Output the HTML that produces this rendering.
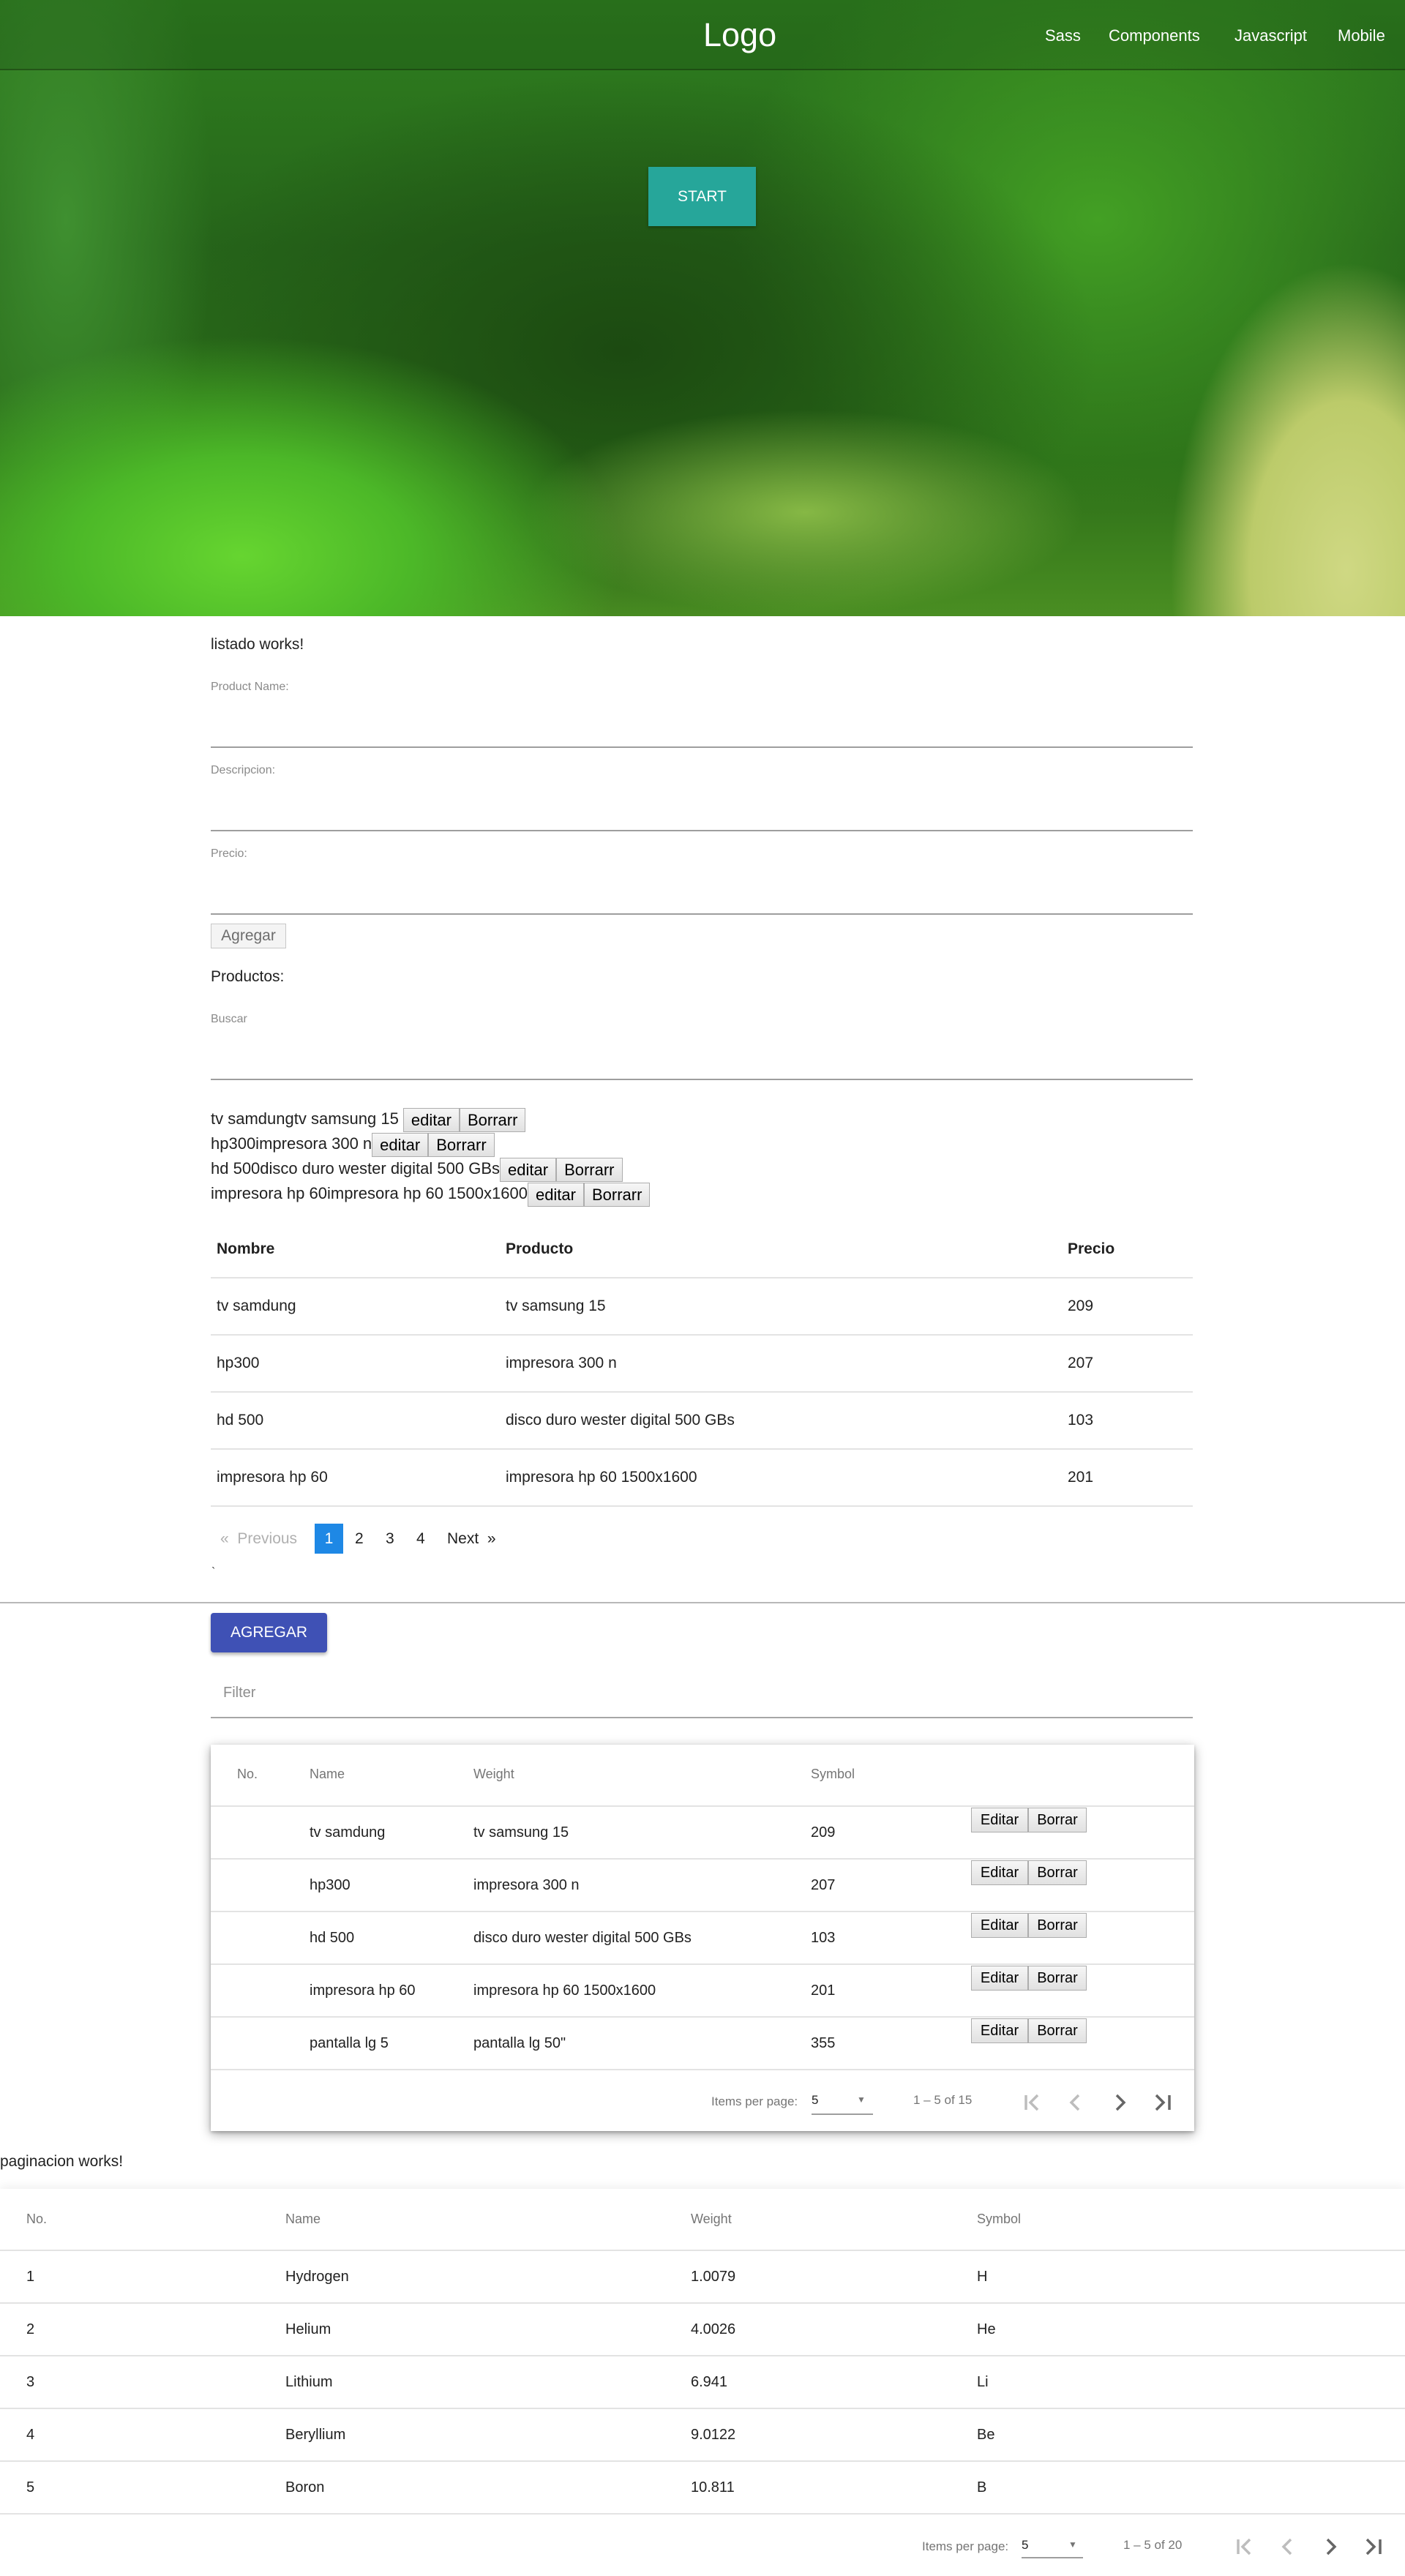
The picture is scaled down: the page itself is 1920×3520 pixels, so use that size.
<!DOCTYPE html>
<html><head><meta charset="utf-8">
<style>
*{box-sizing:border-box;margin:0;padding:0}
body{width:1920px;height:3520px;position:relative;background:#fff;font-family:"Liberation Sans",sans-serif;color:#212121;overflow:hidden}
.a{position:absolute;white-space:nowrap}
#hero{position:absolute;left:0;top:0;width:1920px;height:842px;overflow:hidden;
background:
radial-gradient(ellipse 240px 420px at 1840px 780px,#cfd883 0%,#bccb6a 55%,rgba(170,190,80,0) 100%),
radial-gradient(ellipse 520px 300px at 330px 760px,#66d530 0%,#4cb828 45%,rgba(60,150,30,0) 100%),
radial-gradient(ellipse 380px 140px at 1100px 700px,#86b845 0%,rgba(100,160,50,0) 100%),
radial-gradient(ellipse 200px 500px at 90px 300px,#3f9030 0%,rgba(40,110,30,0) 100%),
radial-gradient(ellipse 650px 380px at 850px 480px,#1c4a11 0%,rgba(30,80,20,0) 100%),
radial-gradient(ellipse 500px 400px at 1500px 300px,#43a024 0%,rgba(60,150,30,0) 100%),
linear-gradient(180deg,#2f7f1f 0%,#26651a 40%,#2b6e18 75%,#4a8e22 100%);}
#nav{position:absolute;left:0;top:0;width:1920px;height:96px;background:rgba(10,40,10,.18);border-bottom:2px solid rgba(20,40,10,.4)}
.nl{position:absolute;top:36px;color:#fff;font-size:22px}
.lbl{position:absolute;left:288px;font-size:16px;color:#8a8a8a}
.ln{position:absolute;left:288px;width:1342px;height:2px;background:#9e9e9e}
.btn{display:inline-block;border:1px solid #adadad;background:linear-gradient(#f6f6f6,#e1e1e1);font-size:22px;padding:2px 10px;line-height:27px;vertical-align:middle;color:#000}
.row{position:absolute;left:288px;font-size:22px;height:34px;line-height:34px}
.t1 div{position:absolute;font-size:21px}
.hl{position:absolute;height:2px;background:#e3e3e3}
.mh{position:absolute;font-size:18px;color:#757575}
.mc{position:absolute;font-size:20px;color:#212121}
.eb{position:absolute;height:34px;border:1px solid #adadad;background:linear-gradient(#f6f6f6,#e1e1e1);font-size:20px;line-height:32px;text-align:center;color:#000}
.pg{position:absolute;font-size:17px;color:#757575}
</style></head><body>
<div id="hero">
  <div id="nav"></div>
  <div class="a" style="left:961px;top:22px;font-size:45px;color:#fff">Logo</div>
  <div class="nl" style="left:1428px">Sass</div>
  <div class="nl" style="left:1515px">Components</div>
  <div class="nl" style="left:1687px">Javascript</div>
  <div class="nl" style="left:1828px">Mobile</div>
  <div class="a" style="left:886px;top:228px;width:147px;height:81px;background:#26a69a;color:#fff;font-size:21px;line-height:81px;text-align:center;box-shadow:0 2px 4px rgba(0,0,0,.3)">START</div>
</div>

<div class="a" style="left:288px;top:869px;font-size:21px">listado works!</div>
<div class="lbl" style="top:930px">Product Name:</div>
<div class="ln" style="top:1020px"></div>
<div class="lbl" style="top:1044px">Descripcion:</div>
<div class="ln" style="top:1134px"></div>
<div class="lbl" style="top:1158px">Precio:</div>
<div class="ln" style="top:1248px"></div>
<div class="a" style="left:288px;top:1262px;width:103px;height:34px;border:1px solid #c8c8c8;background:#f4f4f4;color:#6d6d6d;font-size:21px;line-height:32px;text-align:center">Agregar</div>
<div class="a" style="left:288px;top:1323px;font-size:21px">Productos:</div>
<div class="lbl" style="top:1384px">Buscar</div>
<div class="ln" style="top:1474px"></div>

<div class="row" style="top:1512px">tv samdungtv samsung 15 <span class="btn">editar</span><span class="btn">Borrarr</span></div>
<div class="row" style="top:1546px">hp300impresora 300 n<span class="btn">editar</span><span class="btn">Borrarr</span></div>
<div class="row" style="top:1580px">hd 500disco duro wester digital 500 GBs<span class="btn">editar</span><span class="btn">Borrarr</span></div>
<div class="row" style="top:1614px">impresora hp 60impresora hp 60 1500x1600<span class="btn">editar</span><span class="btn">Borrarr</span></div>

<div class="t1">
<div style="left:296px;top:1695px;font-weight:bold">Nombre</div>
<div style="left:691px;top:1695px;font-weight:bold">Producto</div>
<div style="left:1459px;top:1695px;font-weight:bold">Precio</div>
<div style="left:296px;top:1773px">tv samdung</div><div style="left:691px;top:1773px">tv samsung 15</div><div style="left:1459px;top:1773px">209</div>
<div style="left:296px;top:1851px">hp300</div><div style="left:691px;top:1851px">impresora 300 n</div><div style="left:1459px;top:1851px">207</div>
<div style="left:296px;top:1929px">hd 500</div><div style="left:691px;top:1929px">disco duro wester digital 500 GBs</div><div style="left:1459px;top:1929px">103</div>
<div style="left:296px;top:2007px">impresora hp 60</div><div style="left:691px;top:2007px">impresora hp 60 1500x1600</div><div style="left:1459px;top:2007px">201</div>
</div>
<div class="hl" style="left:288px;width:1342px;top:1745px"></div>
<div class="hl" style="left:288px;width:1342px;top:1823px"></div>
<div class="hl" style="left:288px;width:1342px;top:1901px"></div>
<div class="hl" style="left:288px;width:1342px;top:1979px"></div>
<div class="hl" style="left:288px;width:1342px;top:2057px"></div>

<div class="a" style="left:301px;top:2091px;font-size:21px;color:#b0b0b0">«&nbsp;&nbsp;Previous</div>
<div class="a" style="left:430px;top:2082px;width:39px;height:41px;background:#1e88e5;color:#fff;font-size:21px;line-height:41px;text-align:center">1</div>
<div class="a" style="left:485px;top:2091px;font-size:21px">2</div>
<div class="a" style="left:527px;top:2091px;font-size:21px">3</div>
<div class="a" style="left:569px;top:2091px;font-size:21px">4</div>
<div class="a" style="left:611px;top:2091px;font-size:21px">Next&nbsp;&nbsp;»</div>
<div class="a" style="left:289px;top:2140px;font-size:16px">`</div>
<div class="a" style="left:0;top:2189px;width:1920px;height:2px;background:#b8b8b8"></div>
<div class="a" style="left:288px;top:2204px;width:159px;height:54px;background:#3f51b5;border-radius:4px;color:#fff;font-size:21px;line-height:54px;text-align:center;box-shadow:0 3px 5px rgba(0,0,0,.3)">AGREGAR</div>
<div class="a" style="left:305px;top:2302px;font-size:20px;color:#8e8e8e">Filter</div>
<div class="a" style="left:288px;top:2346px;width:1342px;height:2px;background:#a6a6a6"></div>

<div class="a" style="left:288px;top:2384px;width:1344px;height:528px;background:#fff;box-shadow:0 4px 14px rgba(0,0,0,.35),0 2px 4px rgba(0,0,0,.2)"></div>
<div class="mh" style="left:324px;top:2414px">No.</div>
<div class="mh" style="left:423px;top:2414px">Name</div>
<div class="mh" style="left:647px;top:2414px">Weight</div>
<div class="mh" style="left:1108px;top:2414px">Symbol</div>
<div class="hl" style="left:288px;width:1344px;top:2467px"></div>
<div class="hl" style="left:288px;width:1344px;top:2539px"></div>
<div class="hl" style="left:288px;width:1344px;top:2611px"></div>
<div class="hl" style="left:288px;width:1344px;top:2683px"></div>
<div class="hl" style="left:288px;width:1344px;top:2755px"></div>
<div class="hl" style="left:288px;width:1344px;top:2827px"></div>

<div class="mc" style="left:423px;top:2493px">tv samdung</div><div class="mc" style="left:647px;top:2493px">tv samsung 15</div><div class="mc" style="left:1108px;top:2493px">209</div>
<div class="mc" style="left:423px;top:2565px">hp300</div><div class="mc" style="left:647px;top:2565px">impresora 300 n</div><div class="mc" style="left:1108px;top:2565px">207</div>
<div class="mc" style="left:423px;top:2637px">hd 500</div><div class="mc" style="left:647px;top:2637px">disco duro wester digital 500 GBs</div><div class="mc" style="left:1108px;top:2637px">103</div>
<div class="mc" style="left:423px;top:2709px">impresora hp 60</div><div class="mc" style="left:647px;top:2709px">impresora hp 60 1500x1600</div><div class="mc" style="left:1108px;top:2709px">201</div>
<div class="mc" style="left:423px;top:2781px">pantalla lg 5</div><div class="mc" style="left:647px;top:2781px">pantalla lg 50"</div><div class="mc" style="left:1108px;top:2781px">355</div>

<div class="eb" style="left:1327px;top:2470px;width:78px">Editar</div><div class="eb" style="left:1405px;top:2470px;width:80px">Borrar</div>
<div class="eb" style="left:1327px;top:2542px;width:78px">Editar</div><div class="eb" style="left:1405px;top:2542px;width:80px">Borrar</div>
<div class="eb" style="left:1327px;top:2614px;width:78px">Editar</div><div class="eb" style="left:1405px;top:2614px;width:80px">Borrar</div>
<div class="eb" style="left:1327px;top:2686px;width:78px">Editar</div><div class="eb" style="left:1405px;top:2686px;width:80px">Borrar</div>
<div class="eb" style="left:1327px;top:2758px;width:78px">Editar</div><div class="eb" style="left:1405px;top:2758px;width:80px">Borrar</div>

<div class="pg" style="left:972px;top:2862px">Items per page:</div>
<div class="a" style="left:1109px;top:2860px;font-size:17px">5</div>
<div class="a" style="left:1171px;top:2862px;font-size:12px;color:#757575">▼</div>
<div class="a" style="left:1109px;top:2888px;width:84px;height:2px;background:#9e9e9e"></div>
<div class="pg" style="left:1248px;top:2860px">1 – 5 of 15</div>
<svg class="a" style="left:1390px;top:2855px" width="230" height="36" viewBox="0 0 230 36">
<g fill="none" stroke-width="3.5">
<path d="M12 8v20M28 8l-10 10 10 10" stroke="#bdbdbd"/>
<path d="M84 8l-10 10 10 10" stroke="#bdbdbd"/>
<path d="M136 8l10 10-10 10" stroke="#666"/>
<path d="M190 8l10 10-10 10M208 8v20" stroke="#666"/>
</g></svg>

<div class="a" style="left:0;top:2942px;font-size:21px">paginacion works!</div>
<div class="a" style="left:0;top:2991px;width:1920px;height:529px;background:#fff;box-shadow:0 -4px 12px rgba(0,0,0,.06)"></div>
<div class="mh" style="left:36px;top:3022px">No.</div>
<div class="mh" style="left:390px;top:3022px">Name</div>
<div class="mh" style="left:944px;top:3022px">Weight</div>
<div class="mh" style="left:1335px;top:3022px">Symbol</div>
<div class="hl" style="left:0;width:1920px;top:3074px"></div>
<div class="hl" style="left:0;width:1920px;top:3146px"></div>
<div class="hl" style="left:0;width:1920px;top:3218px"></div>
<div class="hl" style="left:0;width:1920px;top:3290px"></div>
<div class="hl" style="left:0;width:1920px;top:3362px"></div>
<div class="hl" style="left:0;width:1920px;top:3434px"></div>
<div class="mc" style="left:36px;top:3100px">1</div><div class="mc" style="left:390px;top:3100px">Hydrogen</div><div class="mc" style="left:944px;top:3100px">1.0079</div><div class="mc" style="left:1335px;top:3100px">H</div>
<div class="mc" style="left:36px;top:3172px">2</div><div class="mc" style="left:390px;top:3172px">Helium</div><div class="mc" style="left:944px;top:3172px">4.0026</div><div class="mc" style="left:1335px;top:3172px">He</div>
<div class="mc" style="left:36px;top:3244px">3</div><div class="mc" style="left:390px;top:3244px">Lithium</div><div class="mc" style="left:944px;top:3244px">6.941</div><div class="mc" style="left:1335px;top:3244px">Li</div>
<div class="mc" style="left:36px;top:3316px">4</div><div class="mc" style="left:390px;top:3316px">Beryllium</div><div class="mc" style="left:944px;top:3316px">9.0122</div><div class="mc" style="left:1335px;top:3316px">Be</div>
<div class="mc" style="left:36px;top:3388px">5</div><div class="mc" style="left:390px;top:3388px">Boron</div><div class="mc" style="left:944px;top:3388px">10.811</div><div class="mc" style="left:1335px;top:3388px">B</div>

<div class="pg" style="left:1260px;top:3470px">Items per page:</div>
<div class="a" style="left:1396px;top:3468px;font-size:17px">5</div>
<div class="a" style="left:1460px;top:3470px;font-size:12px;color:#757575">▼</div>
<div class="a" style="left:1396px;top:3494px;width:84px;height:2px;background:#9e9e9e"></div>
<div class="pg" style="left:1535px;top:3468px">1 – 5 of 20</div>
<svg class="a" style="left:1680px;top:3462px" width="230" height="36" viewBox="0 0 230 36">
<g fill="none" stroke-width="3.5">
<path d="M12 8v20M28 8l-10 10 10 10" stroke="#bdbdbd"/>
<path d="M84 8l-10 10 10 10" stroke="#bdbdbd"/>
<path d="M134 8l10 10-10 10" stroke="#666"/>
<path d="M188 8l10 10-10 10M206 8v20" stroke="#666"/>
</g></svg>
</body></html>
